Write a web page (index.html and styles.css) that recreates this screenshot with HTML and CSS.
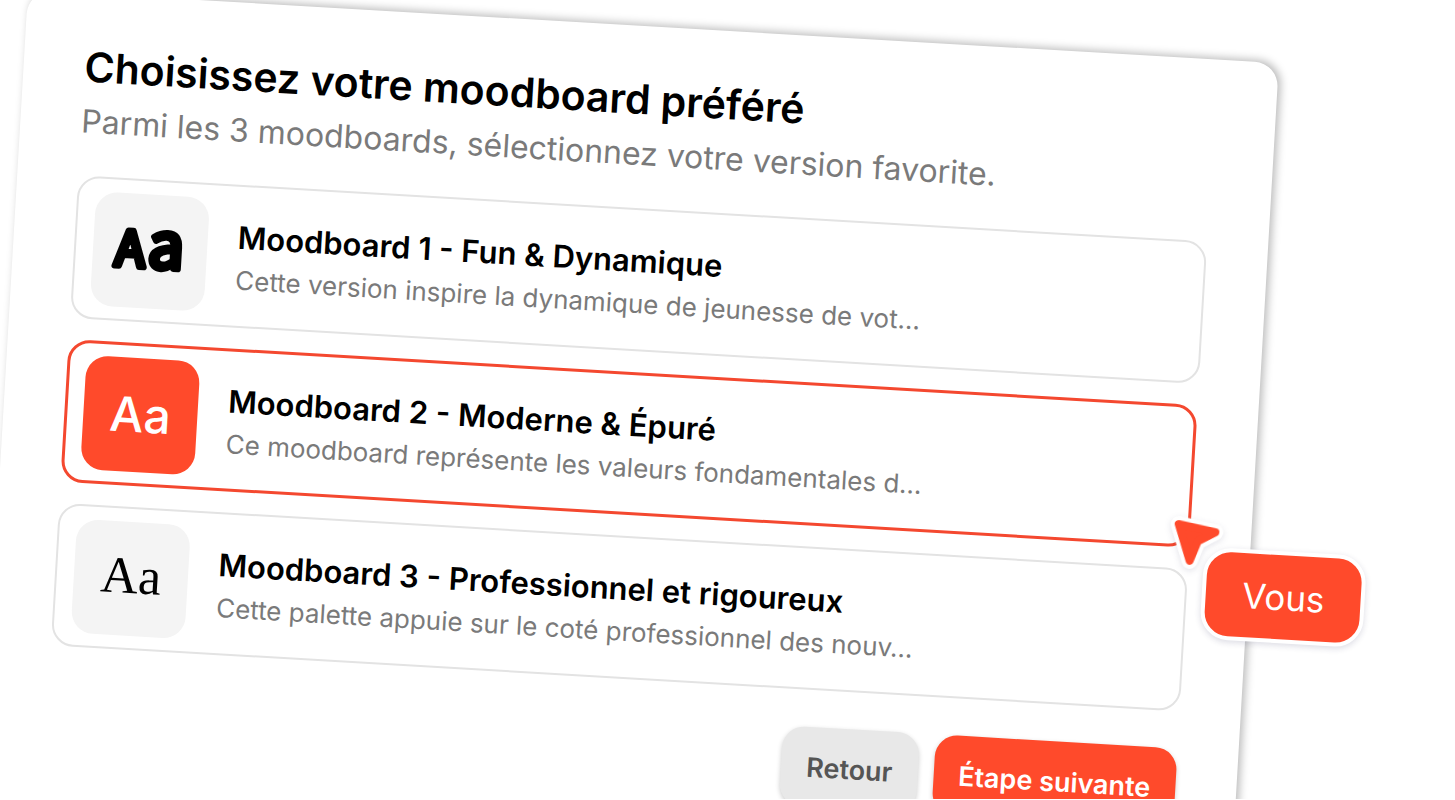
FILE: index.html
```
<!DOCTYPE html>
<html lang="fr">
<head>
<meta charset="utf-8">
<meta name="viewport" content="width=device-width, initial-scale=1">
<title>Choisissez votre moodboard préféré</title>
<link rel="stylesheet" href="styles.css">
</head>
<body>
<div class="stage">
  <main class="panel">
    <header class="header">
      <h1 class="title">Choisissez votre moodboard préféré</h1>
      <p class="subtitle">Parmi les 3 moodboards, sélectionnez votre version favorite.</p>
    </header>

    <div class="options">
      <button type="button" class="option">
        <span class="tile">
          <svg class="fun" viewBox="0 0 114 114" aria-hidden="true">
            <text class="fun-upper" x="37" y="73">A</text>
            <text class="fun-lower" x="73" y="73">a</text>
          </svg>
        </span>
        <span class="text">
          <span class="name">Moodboard 1 - Fun &amp; Dynamique</span>
          <span class="desc">Cette version inspire la dynamique de jeunesse de vot…</span>
        </span>
      </button>
      <button type="button" class="option option-selected" aria-pressed="true">
        <span class="tile tile-modern">Aa</span>
        <span class="text">
          <span class="name">Moodboard 2 - Moderne &amp; Épuré</span>
          <span class="desc">Ce moodboard représente les valeurs fondamentales d…</span>
        </span>
      </button>
      <button type="button" class="option">
        <span class="tile tile-serif">Aa</span>
        <span class="text">
          <span class="name">Moodboard 3 - Professionnel et rigoureux</span>
          <span class="desc">Cette palette appuie sur le coté professionnel des nouv…</span>
        </span>
      </button>
    </div>

    <footer class="actions">
      <button type="button" class="btn btn-back">Retour</button>
      <button type="button" class="btn btn-next">Étape suivante</button>
    </footer>

    <svg class="cursor" viewBox="0 0 66 66" aria-hidden="true">
      <path class="cursor-edge" d="M14 14 L51 20 L34 30 L27 50 Z"/>
      <path class="cursor-fill" d="M14 14 L51 20 L34 30 L27 50 Z"/>
    </svg>
    <div class="badge">Vous</div>
  </main>
</div>
</body>
</html>
```
FILE: styles.css
```
* {
  box-sizing: border-box;
}

body {
  margin: 0;
  background: #fff;
  font-family: Inter, "Liberation Sans", sans-serif;
  color: #000;
}

.stage {
  height: calc(100vh - 1px);
  overflow: hidden;
}

.panel {
  position: relative;
  width: calc(100% - 202px);
  margin: -10px 0 0 28px;
  padding: 47px 61px 60px;
  border-radius: 24px;
  background: #fff;
  box-shadow: 3px -2px 9px rgba(0, 0, 0, 0.27);
  transform: rotate(3.35deg);
  transform-origin: 0 0;
}

.header {
  margin-bottom: 25px;
}

.title {
  margin: 0;
  font-size: 41px;
  font-weight: 600;
  line-height: 52px;
  white-space: nowrap;
}

.subtitle {
  margin: 0;
  font-size: 32px;
  line-height: 58px;
  color: #7a7a7a;
  white-space: nowrap;
}

.options {
  display: flex;
  flex-direction: column;
  gap: 21px;
}

.option {
  display: flex;
  align-items: center;
  gap: 30px;
  min-height: 143px;
  padding: 0 17px;
  border: 2px solid #e3e3e3;
  border-radius: 22px;
  background: #fff;
  font: inherit;
  color: inherit;
  text-align: left;
}

.option-selected {
  padding: 0 16px;
  border: 3px solid #f4482f;
}

.tile {
  display: flex;
  flex: none;
  align-items: center;
  justify-content: center;
  width: 114px;
  height: 114px;
  border-radius: 22px;
  background: #f4f4f4;
}

.tile-modern {
  background: #ff4a2b;
  color: #fff;
  font-size: 48px;
  font-weight: 500;
}

.tile-serif {
  padding-bottom: 6px;
  font-family: "Liberation Serif", serif;
  font-size: 52px;
}

.fun {
  width: 114px;
  height: 114px;
  font-family: "Noto Sans CJK SC", sans-serif;
  font-weight: 400;
  text-anchor: middle;
  stroke: #000;
  stroke-width: 6px;
  stroke-linejoin: round;
}

.fun-upper {
  font-size: 49px;
}

.fun-lower {
  font-size: 64px;
}

.text {
  display: flex;
  flex-direction: column;
  padding-top: 4px;
  white-space: nowrap;
}

.name {
  font-size: 31px;
  font-weight: 600;
  line-height: 44px;
}

.desc {
  font-size: 26px;
  line-height: 42px;
  color: #7a7a7a;
}

.actions {
  display: flex;
  justify-content: flex-end;
  gap: 16px;
  margin-top: 37px;
}

.btn {
  height: 80px;
  padding: 0 25px;
  border: 0;
  border-radius: 22px;
  font-family: inherit;
  font-size: 27px;
  font-weight: 600;
  box-shadow: 0 2px 5px rgba(0, 0, 0, 0.2);
}

.btn-back {
  background: #e8e8e8;
  color: #555;
}

.btn-next {
  background: #ff4a2b;
  color: #fff;
}

.cursor {
  position: absolute;
  top: 452px;
  right: 21px;
  width: 66px;
  height: 66px;
  overflow: visible;
  filter: drop-shadow(0 2px 3px rgba(30, 30, 80, 0.12));
}

.cursor-edge {
  fill: #fff;
  stroke: #fff;
  stroke-width: 16px;
  stroke-linejoin: round;
}

.cursor-fill {
  fill: #ff4a2b;
  stroke: #ff4a2b;
  stroke-width: 8px;
  stroke-linejoin: round;
}

.badge {
  position: absolute;
  top: 487px;
  right: -117px;
  padding: 0 36px;
  border: 4px solid #fff;
  border-radius: 28px;
  background: #ff4a2b;
  color: #fff;
  font-size: 35px;
  line-height: 84px;
  box-shadow: 0 2px 6px rgba(30, 30, 80, 0.16);
}
```
